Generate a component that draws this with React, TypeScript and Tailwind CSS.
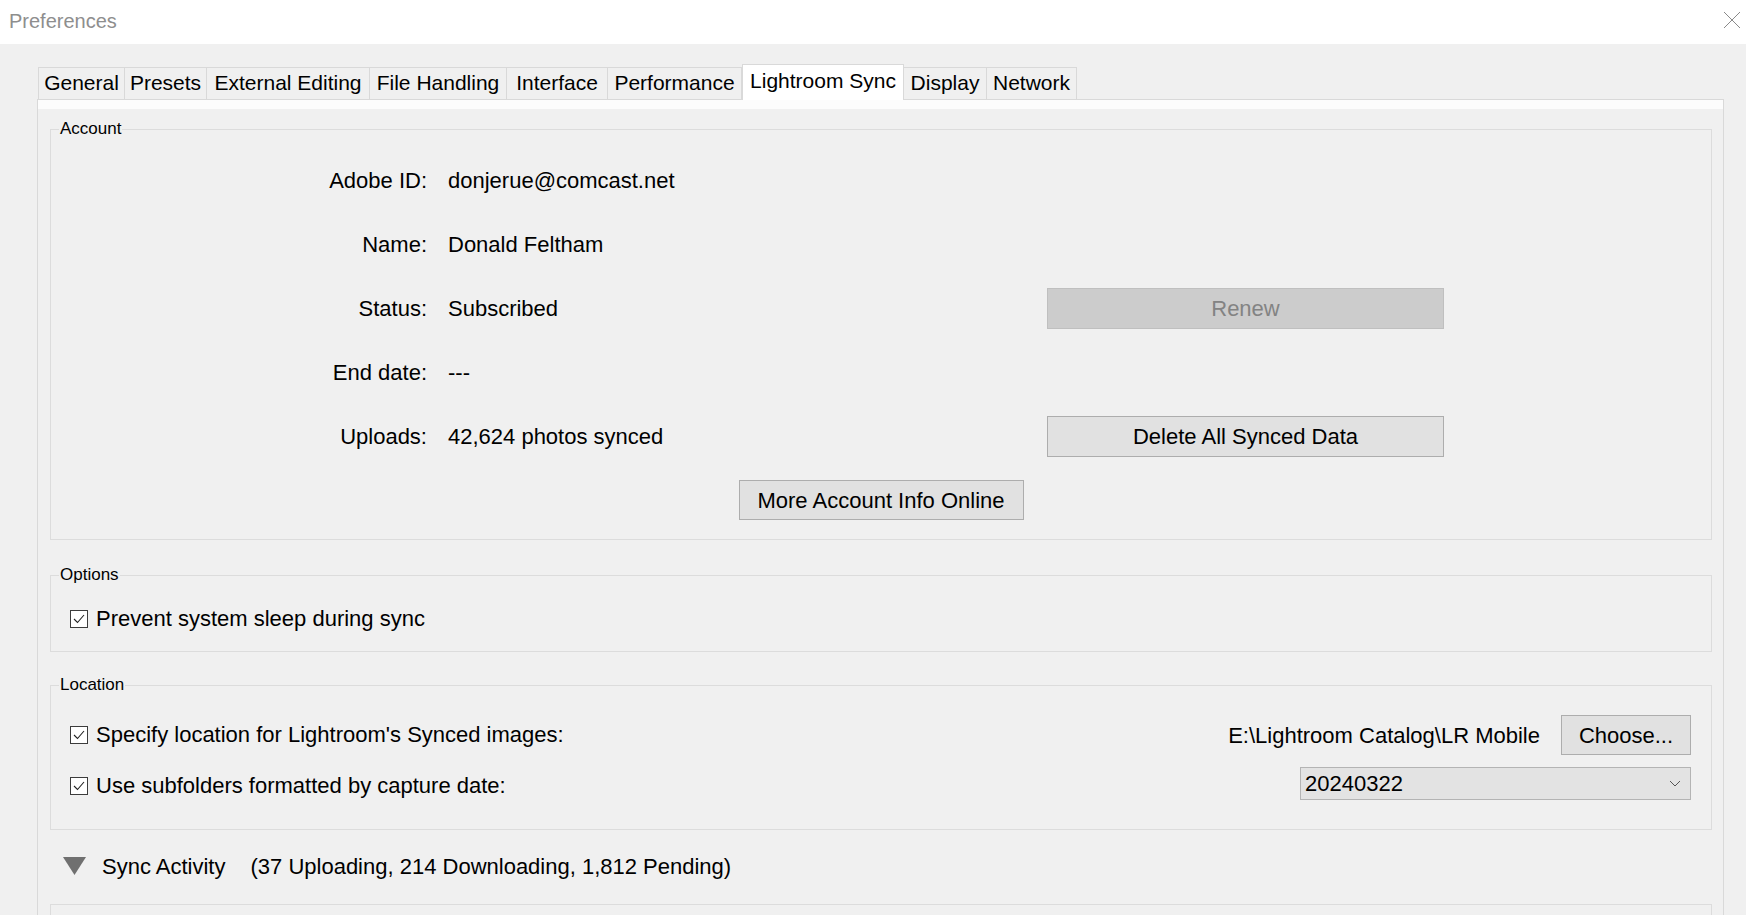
import { ReactNode } from 'react';

const tabs = [
  { name: 'General', w: 'w-[87px]' },
  { name: 'Presets', w: 'w-[82px]' },
  { name: 'External Editing', w: 'w-[163px]' },
  { name: 'File Handling', w: 'w-[137px]' },
  { name: 'Interface', w: 'w-[101px]' },
  { name: 'Performance', w: 'w-[134px]' },
  { name: 'Lightroom Sync', w: 'w-[162px]', active: true },
  { name: 'Display', w: 'w-[83px]' },
  { name: 'Network', w: 'w-[90px]' },
];

const accountRows: { label: string; value: string; button?: 'renew' | 'delete' }[] = [
  { label: 'Adobe ID:', value: 'donjerue@comcast.net' },
  { label: 'Name:', value: 'Donald Feltham' },
  { label: 'Status:', value: 'Subscribed', button: 'renew' },
  { label: 'End date:', value: '---' },
  { label: 'Uploads:', value: '42,624 photos synced', button: 'delete' },
];

export default function App() {
  return (
    <div className="w-[1746px] h-[915px] overflow-hidden bg-[#f0f0f0] text-black font-['Liberation_Sans',Arial,sans-serif]">
      {/* title bar */}
      <div className="h-[44px] bg-white flex items-center justify-between pl-[9px] pr-[5px]">
        <span className="text-[20px] text-[#8e8e8e] mb-[2px]">Preferences</span>
        <svg width="18" height="18" viewBox="0 0 18 18" className="mb-[5px]">
          <path d="M1 1 L17 17 M17 1 L1 17" stroke="#8a8a8a" strokeWidth="1" fill="none" />
        </svg>
      </div>

      {/* tabs */}
      <div className="relative z-10 -mb-px mt-[20px] ml-[38px] flex items-end h-[36px]">
        {tabs.map((t) =>
          t.active ? (
            <div
              key={t.name}
              className={`${t.w} h-[36px] bg-white border border-b-0 border-[#d9d9d9] flex items-center justify-center text-[21px] pb-[4px]`}
            >
              {t.name}
            </div>
          ) : (
            <div
              key={t.name}
              className={`${t.w} h-[33px] bg-[#f0f0f0] border border-l-0 first:border-l border-[#d9d9d9] flex items-center justify-center text-[21px] pb-[2px]`}
            >
              {t.name}
            </div>
          )
        )}
      </div>

      {/* panel */}
      <div className="ml-[37px] w-[1687px] h-[820px] border border-[#d9d9d9]">
        <div className="h-[9px] bg-[#fcfcfc]" />
        <div className="ml-[12px] w-[1662px]">
          <fieldset className="mt-[10px] border border-[#dcdcdc] pb-[19px]">
            <Legend>Account</Legend>
            <div className="pt-[21px] flex flex-col gap-[23px]">
              {accountRows.map((r) => (
                <div key={r.label} className="flex items-center h-[41px] text-[22px]">
                  <div className="w-[376px] text-right">{r.label}</div>
                  <div className="ml-[21px] w-[599px]">{r.value}</div>
                  {r.button === 'renew' && (
                    <div className="w-[397px] h-[41px] flex items-center justify-center bg-[#cccccc] border border-[#bfbfbf] text-[#838383]">
                      Renew
                    </div>
                  )}
                  {r.button === 'delete' && (
                    <div className="w-[397px] h-[41px] flex items-center justify-center bg-[#e1e1e1] border border-[#adadad]">
                      Delete All Synced Data
                    </div>
                  )}
                </div>
              ))}
            </div>
            <div className="mx-auto mt-[23px] w-[285px] h-[40px] flex items-center justify-center bg-[#e1e1e1] border border-[#adadad] text-[22px]">
              More Account Info Online
            </div>
          </fieldset>

          <fieldset className="mt-[25px] border border-[#dcdcdc] pb-[20px]">
            <Legend>Options</Legend>
            <div className="pt-[22px] pl-[19px]">
              <CheckRow>Prevent system sleep during sync</CheckRow>
            </div>
          </fieldset>

          <fieldset className="mt-[23px] border border-[#dcdcdc] pb-[29px]">
            <Legend>Location</Legend>
            <div className="pl-[19px] pr-[20px]">
              <div className="pt-[20px] flex items-center justify-between h-[60px]">
                <CheckRow>Specify location for Lightroom's Synced images:</CheckRow>
                <div className="flex items-center">
                  <span className="text-[22px]">E:\Lightroom Catalog\LR Mobile</span>
                  <div className="ml-[21px] w-[130px] h-[40px] flex items-center justify-center bg-[#e1e1e1] border border-[#adadad] text-[22px]">
                    Choose...
                  </div>
                </div>
              </div>
              <div className="mt-[12px] flex items-center justify-between h-[33px]">
                <div className="mt-[4px]">
                  <CheckRow>Use subfolders formatted by capture date:</CheckRow>
                </div>
                <div className="w-[391px] h-[33px] flex items-center justify-between bg-[#e3e3e3] border border-[#b4b4b4] pl-[4px] pr-[9px] text-[22px]">
                  <span>20240322</span>
                  <svg width="12" height="7" viewBox="0 0 12 7">
                    <path d="M1 1 L6 6 L11 1" stroke="#555" strokeWidth="1" fill="none" />
                  </svg>
                </div>
              </div>
            </div>
          </fieldset>

          <div className="mt-[21px] h-[30px] flex items-center pl-[13px] text-[22px]">
            <svg width="23" height="18" viewBox="0 0 23 18">
              <path d="M0 0 H23 L11.5 18 Z" fill="#707070" />
            </svg>
            <span className="ml-[16px]">Sync Activity</span>
            <span className="ml-[25px]">(37 Uploading, 214 Downloading, 1,812 Pending)</span>
          </div>

          <div className="mt-[23px] h-[60px] border border-[#dcdcdc]" />
        </div>
      </div>
    </div>
  );
}

function Legend({ children }: { children: ReactNode }) {
  return <legend className="ml-[8px] px-px text-[17px] leading-[20px]">{children}</legend>;
}

function CheckRow({ children }: { children: ReactNode }) {
  return (
    <div className="flex items-center h-[24px] text-[22px] leading-[24px]">
      <div className="w-[18px] h-[18px] border border-[#3c3c3c] bg-white flex items-center justify-center">
        <svg width="14" height="12" viewBox="0 0 14 12">
          <path d="M2 6 L5.5 9.5 L12 2" stroke="#222" strokeWidth="1.1" fill="none" />
        </svg>
      </div>
      <span className="ml-[8px]">{children}</span>
    </div>
  );
}
